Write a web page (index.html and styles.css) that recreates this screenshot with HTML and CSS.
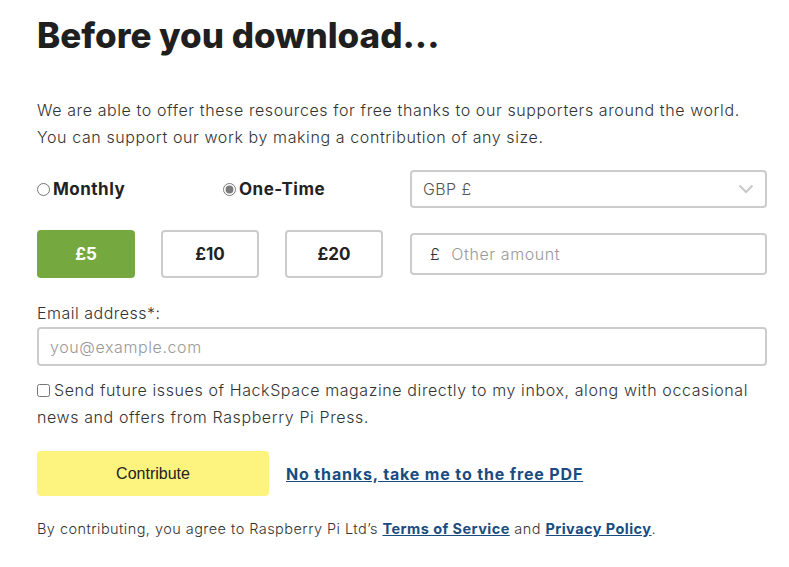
FILE: index.html
```html
<!DOCTYPE html>
<html>
<head>
<meta charset="utf-8">
<link rel="stylesheet" href="styles.css">
</head>
<body>
<main class="page">
  <h1 class="title">Before you download...</h1>
  <p class="intro">We are able to offer these resources for free thanks to our supporters around the world. You can support our work by making a contribution of any size.</p>

  <div class="grid">
    <div class="freq">
      <label class="radio radio-monthly"><input type="radio" name="f"> Monthly</label>
      <label class="radio"><input type="radio" name="f" checked> One-Time</label>
    </div>
    <div class="select">
      <span>GBP £</span>
      <svg class="chev" width="16" height="10" viewBox="0 0 16 10"><path d="M1.5 1.5 L8 8 L14.5 1.5" fill="none" stroke="#c8c8c8" stroke-width="2"/></svg>
    </div>
    <div class="amounts">
      <button class="amt amt-active">£5</button>
      <button class="amt">£10</button>
      <button class="amt">£20</button>
    </div>
    <div class="other">
      <span class="cur">£</span><span class="ph">Other amount</span>
    </div>
  </div>

  <label class="email-label">Email address*:</label>
  <div class="email"><span class="ph">you@example.com</span></div>

  <label class="optin"><input type="checkbox">Send future issues of HackSpace magazine directly to my inbox, along with occasional news and offers from Raspberry Pi Press.</label>

  <div class="actions">
    <button class="contribute">Contribute</button>
    <a class="skip" href="#">No thanks, take me to the free PDF</a>
  </div>

  <p class="terms">By contributing, you agree to Raspberry Pi Ltd’s <a href="#">Terms of Service</a> and <a href="#">Privacy Policy</a>.</p>
</main>
</body>
</html>
```

FILE: styles.css
```css
* { box-sizing: border-box; }
body {
  margin: 0;
  background: #fff;
  font-family: "Inter", "Noto Sans", sans-serif;
  color: #2a2a2a;
}
.page {
  width: 730px;
  margin-left: 37px;
  padding-top: 14px;
}
.title {
  margin: 0;
  font-size: 35px;
  font-weight: 800;
  color: #1f1f1f;
  line-height: 42px;
  letter-spacing: 0;
}
.intro {
  margin: 41px 0 0;
  font-size: 16px;
  line-height: 27px;
  color: #333;
  font-weight: 300;
  letter-spacing: 0.6px;
}
.grid {
  display: grid;
  grid-template-columns: 357px 357px;
  column-gap: 16px;
  row-gap: 22px;
  margin-top: 19px;
}
.freq {
  display: flex;
  align-items: center;
}
.radio {
  display: flex;
  align-items: center;
  font-weight: 700;
  font-size: 17px;
  color: #222;
  letter-spacing: 0.5px;
}
.radio input {
  margin: 0 3px 0 0;
  width: 13px;
  height: 13px;
  accent-color: #7a7a7a;
}
.radio-monthly { width: 186px; }
.select {
  height: 38px;
  border: 2px solid #ccc;
  border-radius: 4px;
  display: flex;
  align-items: center;
  justify-content: space-between;
  padding: 0 11px 0 11px;
  font-size: 16px;
  color: #555;
  font-weight: 300;
  letter-spacing: 0.4px;
}
.amounts {
  display: flex;
  gap: 26px;
}
.amt {
  width: 98px;
  height: 48px;
  border: 2px solid #ccc;
  border-radius: 4px;
  background: #fff;
  font-family: inherit;
  font-size: 17px;
  font-weight: 700;
  color: #222;
}
.amt-active {
  background: #75a940;
  border-color: #75a940;
  color: #fff;
}
.other {
  align-self: center;
  height: 42px;
  border: 2px solid #ccc;
  border-radius: 4px;
  display: flex;
  align-items: center;
  padding-left: 18px;
  font-size: 16px;
  font-weight: 300;
  letter-spacing: 0.6px;
}
.cur { color: #333; margin-right: 11px; }
.ph { color: #999; }
.email-label {
  display: block;
  margin-top: 23px;
  font-size: 16px;
  font-weight: 300;
  color: #333;
  line-height: 24px;
  letter-spacing: 0.5px;
}
.email {
  margin-top: 2px;
  height: 39px;
  border: 2px solid #ccc;
  border-radius: 4px;
  display: flex;
  align-items: center;
  padding-left: 11px;
  font-size: 16px;
  font-weight: 300;
  letter-spacing: 0.6px;
}
.optin {
  display: block;
  margin-top: 11px;
  font-size: 16px;
  line-height: 27px;
  font-weight: 300;
  color: #333;
  letter-spacing: 0.6px;
}
.optin input {
  margin: 0 4px 0 0;
  width: 13px;
  height: 13px;
  vertical-align: -1px;
}
.actions {
  display: flex;
  align-items: center;
  gap: 17px;
  margin-top: 20px;
}
.contribute {
  width: 232px;
  height: 45px;
  border: none;
  border-radius: 4px;
  background: #fdf47f;
  font-family: "Liberation Sans", Arial, sans-serif;
  font-size: 16px;
  color: #222;
}
.skip {
  font-size: 16px;
  font-weight: 700;
  color: #1a4c80;
  letter-spacing: 0.85px;
}
.terms {
  margin: 24px 0 0;
  font-size: 14.5px;
  font-weight: 300;
  color: #333;
  letter-spacing: 0.45px;
}
.terms a {
  color: #1a4c80;
  font-weight: 700;
}
```
